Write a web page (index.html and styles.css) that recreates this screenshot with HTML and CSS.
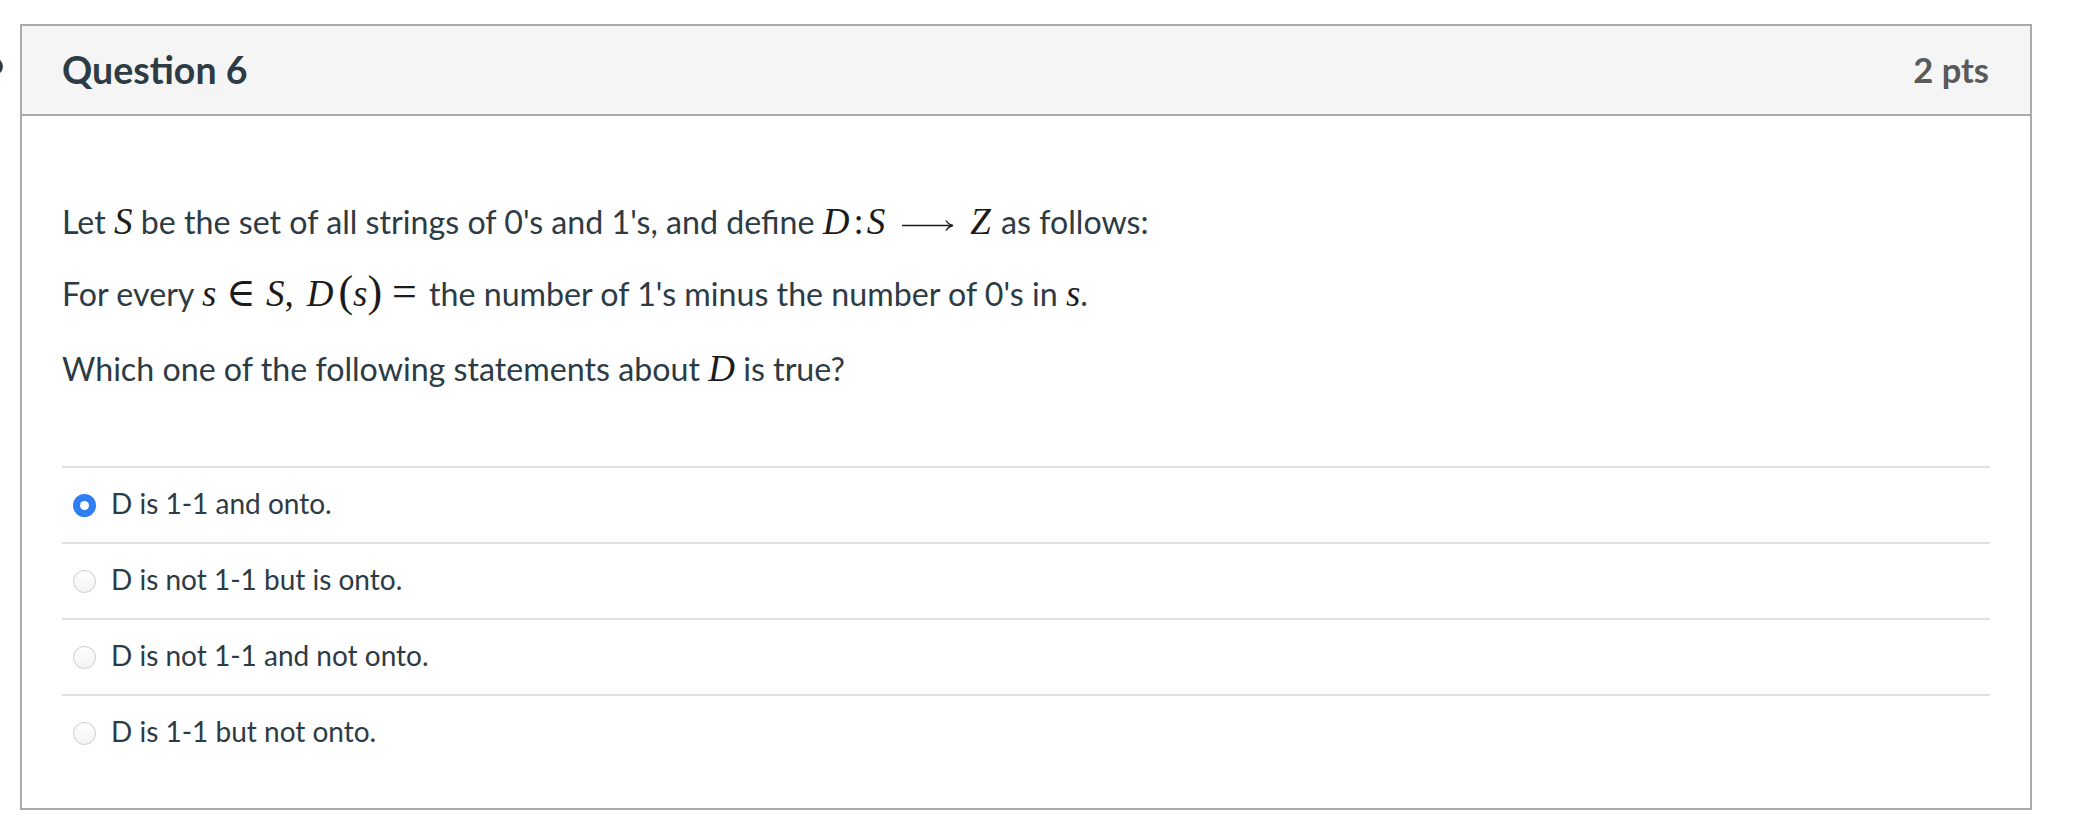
FILE: index.html
```html
<!DOCTYPE html>
<html lang="en">
<head>
<meta charset="utf-8">
<title>Question 6</title>
<link rel="stylesheet" href="styles.css">
</head>
<body>
<span class="edge-marker"></span>
<div class="page">
  <div class="card">
    <div class="card-header">
      <h2 class="title">Question 6</h2>
      <span class="points">2 pts</span>
    </div>
    <div class="card-body">
      <p class="q q1">Let <span class="mi">S</span> be the set of all strings of 0's and 1's, and define <span class="mi">D</span><span class="mo colon">:</span><span class="mi">S</span><svg class="arrow" width="52" height="14" viewBox="0 0 52 14"><path d="M0 7.5H50" stroke="#1b1b1b" stroke-width="1.4" fill="none"/><path d="M44 2.5 Q46.5 6.5 51 7.5 Q46.5 8.5 44 12.5" stroke="#1b1b1b" stroke-width="1.4" fill="none"/></svg><span class="mi z">Z</span> as follows:</p>
      <p class="q q2">For every <span class="mi">s</span><span class="mo rel in">∈</span><span class="mi">S</span><span class="mo comma">,</span><span class="mi">D</span><span class="mo paren lp">(</span><span class="mi">s</span><span class="mo paren">)</span><span class="mo rel eq">=</span>the number of 1's minus the number of 0's in <span class="mi">s</span>.</p>
      <p class="q q3">Which one of the following statements about <span class="mi">D</span> is true?</p>
      <div class="answers">
        <label class="answer"><span class="radio checked"></span><span class="answer-text">D is 1-1 and onto.</span></label>
        <label class="answer"><span class="radio"></span><span class="answer-text">D is not 1-1 but is onto.</span></label>
        <label class="answer"><span class="radio"></span><span class="answer-text">D is not 1-1 and not onto.</span></label>
        <label class="answer"><span class="radio"></span><span class="answer-text">D is 1-1 but not onto.</span></label>
      </div>
    </div>
  </div>
</div>
</body>
</html>
```
FILE: styles.css
```css
html, body {
  margin: 0;
  padding: 0;
  background: #ffffff;
}

body {
  font-family: Lato, "Helvetica Neue", "Liberation Sans", Arial, sans-serif;
  color: #2d3b45;
  position: relative;
}

.edge-marker {
  position: absolute;
  left: -14px;
  top: 58px;
  width: 17px;
  height: 17px;
  border-radius: 50%;
  background: #2d3b45;
}

.page {
  padding: 24px 0 0 20px;
}

.card {
  width: 2012px;
  box-sizing: border-box;
  border: 2px solid #aaaaaa;
  background: #ffffff;
}

.card-header {
  height: 90px;
  box-sizing: border-box;
  background: #f5f5f5;
  border-bottom: 2px solid #aaaaaa;
  display: flex;
  align-items: center;
  justify-content: space-between;
  padding: 0 41px 0 40px;
}

.title {
  margin: 0;
  font-size: 37.5px;
  font-weight: 700;
  color: #2d3b45;
  line-height: 1;
}

.points {
  font-size: 34.5px;
  font-weight: 700;
  color: #5a5a5a;
  line-height: 1;
}

.card-body {
  padding: 87px 40px 38px 40px;
}

.q {
  margin: 0;
  font-size: 32.2px;
  line-height: 38px;
}

.q1 { margin-bottom: 34px; }
.q2 { margin-bottom: 37px; }

.mi {
  font-family: "Liberation Serif", "DejaVu Serif", serif;
  font-style: italic;
  font-size: 37px;
  line-height: 0;
  color: #1b1b1b;
}

.mo {
  font-family: "Liberation Serif", "DejaVu Serif", serif;
  font-size: 37px;
  line-height: 0;
  color: #1b1b1b;
}

.colon {
  margin: 0 3px 0 4px;
}

.arrow {
  vertical-align: 2px;
  margin: 0 16px 0 17px;
}

.z {
  margin-right: 2px;
}

.rel {
  font-size: 44px;
  margin: 0 10px;
}

.in {
  font-size: 40px;
}

.comma {
  margin-right: 13px;
}

.paren {
  font-size: 44px;
}

.lp {
  margin-left: 5px;
}

.eq {
  margin-right: 12px;
}

.answers {
  margin-top: 78px;
  display: flex;
  flex-direction: column;
}

.answer {
  height: 76px;
  box-sizing: border-box;
  border-top: 2px solid #e0e0e0;
  display: flex;
  align-items: center;
  padding-left: 11px;
}

.radio {
  width: 23px;
  height: 23px;
  box-sizing: border-box;
  border-radius: 50%;
  border: 1px solid #cccccc;
  background: linear-gradient(#ffffff, #f3f3f3);
  margin-right: 15px;
  flex: none;
}

.radio.checked {
  border: none;
  background: #2f7ef4;
  display: flex;
  align-items: center;
  justify-content: center;
}

.radio.checked::after {
  content: "";
  width: 9px;
  height: 9px;
  border-radius: 50%;
  background: #ffffff;
}

.answer-text {
  font-size: 28px;
  line-height: 32px;
  padding-bottom: 5px;
  color: #2d3b45;
}
```
